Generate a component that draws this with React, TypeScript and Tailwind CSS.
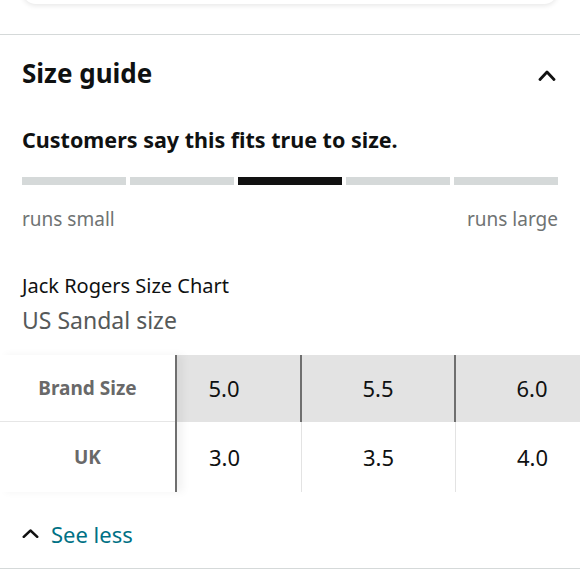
import React from 'react';

const SEGMENTS = [false, false, true, false, false];

const SIZES: { brand: string; uk: string }[] = [
  { brand: '5.0', uk: '3.0' },
  { brand: '5.5', uk: '3.5' },
  { brand: '6.0', uk: '4.0' },
];

function ChevronUp({ className, width = 2.8 }: { className?: string; width?: number }) {
  return (
    <svg viewBox="0 0 18 12" className={className} fill="none" preserveAspectRatio="none">
      <path d="M2 10.5 L9 3 L16 10.5" stroke="#111" strokeWidth={width} strokeLinecap="round" strokeLinejoin="round" />
    </svg>
  );
}

export default function App() {
  return (
    <div
      className="w-[580px] h-[580px] bg-white overflow-hidden text-[#0f1111]"
      style={{ fontFamily: '"Noto Sans", "Liberation Sans", sans-serif' }}
    >
      {/* bottom edge of the card above */}
      <div className="mx-[22px] -mt-[20px] h-[24px] rounded-b-[14px] bg-white shadow-[0_2px_5px_rgba(0,0,0,0.09)]" />

      <div className="mt-[30px] border-t border-[#d5d9d9]">
        <div className="flex items-center justify-between px-[22px] pt-[22px]">
          <h2 className="text-[26px] leading-[32px] font-bold">Size guide</h2>
          <ChevronUp className="w-[18px] h-[12px] mt-[4px] mr-[2px]" />
        </div>

        <div className="px-[22px]">
          <p className="mt-[37px] text-[21.5px] leading-[28px] font-bold">Customers say this fits true to size.</p>

          <div className="mt-[23px] flex gap-[3.5px]">
            {SEGMENTS.map((on, i) => (
              <div key={i} className={`flex-1 h-[8px] ${on ? 'bg-[#111111]' : 'bg-[#d5d9d9]'}`} />
            ))}
          </div>

          <div className="mt-[22px] flex justify-between text-[19px] leading-[24px] text-[#6f7373]">
            <span>runs small</span>
            <span>runs large</span>
          </div>

          <p className="mt-[42px] text-[20px] leading-[26px]">Jack Rogers Size Chart</p>
          <p className="mt-[6px] text-[23px] leading-[30px] text-[#565959]">US Sandal size</p>
        </div>

        <div className="mt-[20px] flex">
          <div className="w-[177px] shrink-0 border-r-2 border-[#6f6f6f] relative z-10 bg-white shadow-[6px_0_8px_rgba(0,0,0,0.05)]">
            <div className="h-[67px] flex items-center justify-center border-b border-[#e6e6e6] text-[19px] font-bold text-[#696969]">
              Brand Size
            </div>
            <div className="h-[70px] flex items-center justify-center text-[19px] font-bold text-[#696969]">
              UK
            </div>
          </div>
          <div className="flex-1 overflow-hidden">
            <div className="-ml-[29px] flex">
              {SIZES.map((s) => (
                <div key={s.brand} className="w-[154px] shrink-0">
                  <div className="h-[67px] flex items-center justify-center bg-[#e3e3e3] border-r-2 border-[#6f6f6f] text-[22px]">
                    {s.brand}
                  </div>
                  <div className="h-[70px] flex items-center justify-center border-r border-[#e3e3e3] text-[22px]">
                    {s.uk}
                  </div>
                </div>
              ))}
            </div>
          </div>
        </div>

        <div className="mt-[28px] flex items-center gap-[12px] px-[22px]">
          <ChevronUp className="w-[17px] h-[10px] mt-[-2px]" width={3} />
          <span className="text-[22px] leading-[28px] text-[#007185]">See less</span>
        </div>

        <div className="mt-[20px] border-t border-[#d5d9d9]" />
      </div>
    </div>
  );
}
